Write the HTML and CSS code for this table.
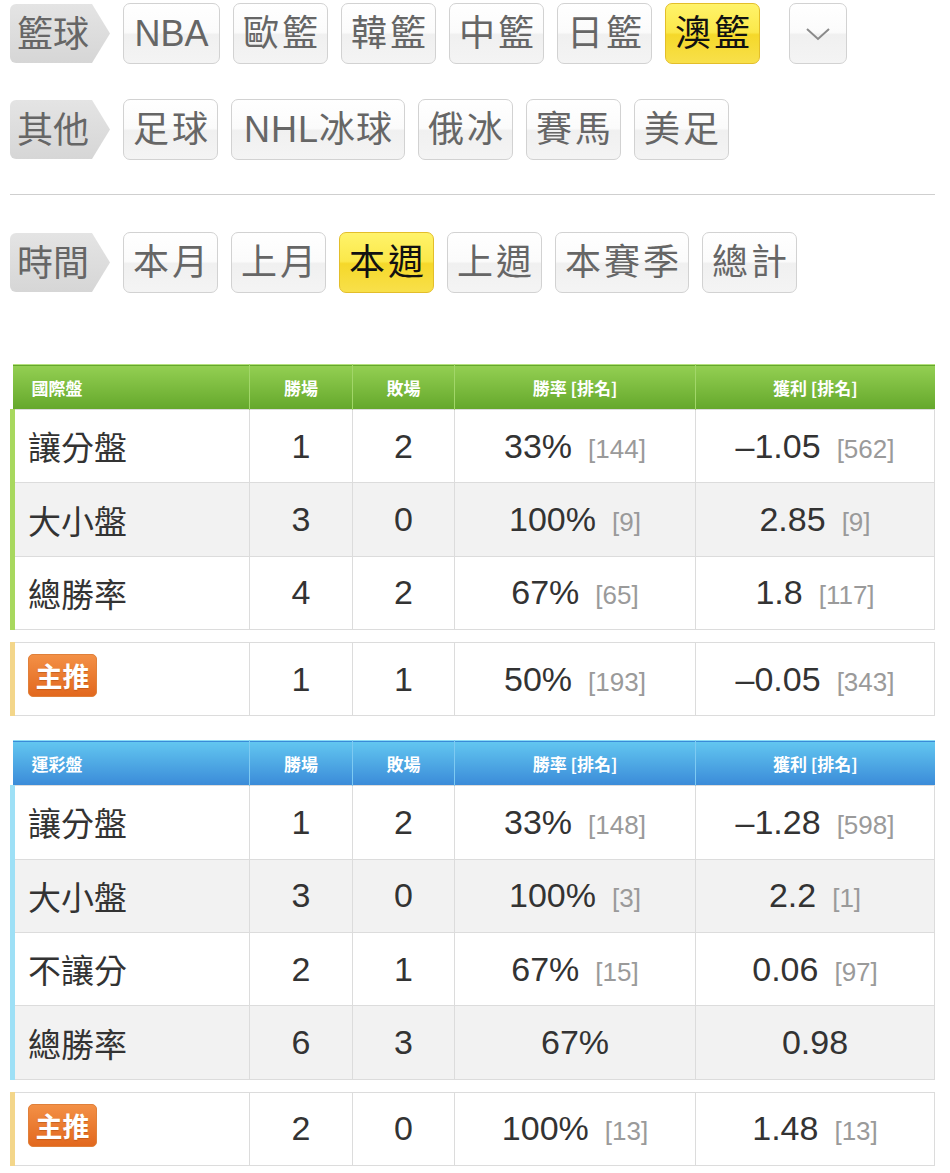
FILE: index.html
```html
<!DOCTYPE html>
<html lang="zh-Hant">
<head>
<meta charset="utf-8">
<title>戰績</title>
<link rel="stylesheet" href="styles.css">
</head>
<body>
<div class="page">
  <div class="filter-row">
    <div class="tag">籃球</div>
    <a class="btn nba">NBA</a>
    <a class="btn">歐籃</a>
    <a class="btn">韓籃</a>
    <a class="btn">中籃</a>
    <a class="btn">日籃</a>
    <a class="btn active">澳籃</a>
    <a class="btn more"><svg width="26" height="14" viewBox="0 0 26 14"><path d="M2 2 L13 12 L24 2" fill="none" stroke="#8a8a8a" stroke-width="2"/></svg></a>
  </div>
  <div class="filter-row">
    <div class="tag">其他</div>
    <a class="btn">足球</a>
    <a class="btn latin">NHL冰球</a>
    <a class="btn">俄冰</a>
    <a class="btn">賽馬</a>
    <a class="btn">美足</a>
  </div>
  <div class="sep"></div>
  <div class="filter-row time-row">
    <div class="tag">時間</div>
    <a class="btn">本月</a>
    <a class="btn">上月</a>
    <a class="btn active">本週</a>
    <a class="btn">上週</a>
    <a class="btn">本賽季</a>
    <a class="btn">總計</a>
  </div>

  <table class="stats green">
    <colgroup><col class="c1"><col class="c2"><col class="c3"><col class="c4"><col class="c5"></colgroup>
    <thead>
      <tr><th class="first">國際盤</th><th>勝場</th><th>敗場</th><th>勝率 [排名]</th><th>獲利 [排名]</th></tr>
    </thead>
    <tbody>
      <tr><td class="first">讓分盤</td><td>1</td><td>2</td><td>33%<span class="rk">[144]</span></td><td>–1.05<span class="rk">[562]</span></td></tr>
      <tr class="alt"><td class="first">大小盤</td><td>3</td><td>0</td><td>100%<span class="rk">[9]</span></td><td>2.85<span class="rk">[9]</span></td></tr>
      <tr><td class="first">總勝率</td><td>4</td><td>2</td><td>67%<span class="rk">[65]</span></td><td>1.8<span class="rk">[117]</span></td></tr>
    </tbody>
  </table>
  <table class="stats pick">
    <colgroup><col class="c1"><col class="c2"><col class="c3"><col class="c4"><col class="c5"></colgroup>
    <tbody>
      <tr><td class="first"><span class="badge">主推</span></td><td>1</td><td>1</td><td>50%<span class="rk">[193]</span></td><td>–0.05<span class="rk">[343]</span></td></tr>
    </tbody>
  </table>

  <table class="stats blue">
    <colgroup><col class="c1"><col class="c2"><col class="c3"><col class="c4"><col class="c5"></colgroup>
    <thead>
      <tr><th class="first">運彩盤</th><th>勝場</th><th>敗場</th><th>勝率 [排名]</th><th>獲利 [排名]</th></tr>
    </thead>
    <tbody>
      <tr><td class="first">讓分盤</td><td>1</td><td>2</td><td>33%<span class="rk">[148]</span></td><td>–1.28<span class="rk">[598]</span></td></tr>
      <tr class="alt"><td class="first">大小盤</td><td>3</td><td>0</td><td>100%<span class="rk">[3]</span></td><td>2.2<span class="rk">[1]</span></td></tr>
      <tr><td class="first">不讓分</td><td>2</td><td>1</td><td>67%<span class="rk">[15]</span></td><td>0.06<span class="rk">[97]</span></td></tr>
      <tr class="alt"><td class="first">總勝率</td><td>6</td><td>3</td><td>67%</td><td>0.98</td></tr>
    </tbody>
  </table>
  <table class="stats pick">
    <colgroup><col class="c1"><col class="c2"><col class="c3"><col class="c4"><col class="c5"></colgroup>
    <tbody>
      <tr><td class="first"><span class="badge">主推</span></td><td>2</td><td>0</td><td>100%<span class="rk">[13]</span></td><td>1.48<span class="rk">[13]</span></td></tr>
    </tbody>
  </table>
</div>
</body>
</html>
```
FILE: styles.css
```css
html, body {
  margin: 0;
  padding: 0;
  background: #fff;
}
body {
  font-family: "Liberation Sans", "Noto Sans CJK TC", sans-serif;
  color: #333;
}
.page {
  width: 925px;
  padding: 3px 15px 0 10px;
}
.filter-row {
  display: flex;
  align-items: center;
  gap: 13px;
  height: 61px;
  margin-bottom: 35px;
}
.tag {
  width: 100px;
  height: 59px;
  box-sizing: border-box;
  padding-left: 7px;
  font-size: 36px;
  line-height: 54px;
  color: #666;
  background: linear-gradient(#e4e4e4, #d6d6d6);
  border-radius: 6px 0 0 6px;
  clip-path: polygon(0 0, 82px 0, 100% 50%, 82px 100%, 0 100%);
  font-family: "Noto Sans CJK TC", sans-serif;
}
.btn {
  display: block;
  height: 61px;
  box-sizing: border-box;
  padding: 0 6px 0 9px;
  border: 1px solid #d2d2d2;
  border-radius: 7px;
  background: linear-gradient(#ffffff 0%, #fbfbfb 48%, #f0f0f0 52%, #f4f4f4 100%);
  color: #666;
  font-size: 36px;
  letter-spacing: 3px;
  line-height: 59px;
  white-space: nowrap;
}
.btn.nba {
  letter-spacing: 0;
  padding: 0 10.5px;
}
.btn.latin {
  letter-spacing: 1px;
  padding: 0 11px 0 12px;
}
.btn.active {
  background: linear-gradient(#fff36a 0%, #fbe84a 48%, #f5d82a 52%, #f8e04a 100%);
  border-color: #e3be2a;
  color: #111;
}
.btn.more {
  width: 58px;
  margin-left: 16px;
  padding: 0;
  display: flex;
  align-items: center;
  justify-content: center;
}
.sep {
  height: 1px;
  background: #cfcfcf;
  margin-top: -1px;
  margin-bottom: 37px;
}
.time-row {
  margin-bottom: 71px;
}

.stats {
  width: 922px;
  border-collapse: collapse;
  table-layout: fixed;
  margin-bottom: 12px;
}
.stats col.c1 { width: 237px; }
.stats col.c2 { width: 103px; }
.stats col.c3 { width: 102px; }
.stats col.c4 { width: 241px; }
.stats col.c5 { width: 239px; }
.stats th {
  height: 44px;
  padding: 0;
  color: #fff;
  font-size: 17px;
  font-weight: bold;
  text-align: center;
  font-family: "Noto Sans CJK TC", sans-serif;
}
.stats th.first {
  text-align: left;
  padding-left: 19px;
}
.green thead tr {
  background: linear-gradient(#93cf52, #64a72b);
  border-top: 1px solid #b4e07c;
}
.green th { border-left: 1px solid #a2d669; }
.blue thead tr {
  background: linear-gradient(#62c6f0, #3a8ad8);
  border-top: 1px solid #8cdcf6;
}
.blue th { border-left: 1px solid #7ecaf2; }
.stats th.first { border-left: none; }
.stats td {
  height: 72.4px;
  padding: 0;
  border: 1px solid #dcdcdc;
  text-align: center;
  font-size: 34px;
  color: #333;
}
.stats.pick td { height: 72px; }
.stats td.first {
  text-align: left;
  padding-left: 13px;
  font-size: 33px;
  font-family: "Noto Sans CJK TC", sans-serif;
}
.green td.first { border-left: 5px solid #a8d85e; }
.blue td.first { border-left: 5px solid #9ee0f6; }
.pick td.first { border-left: 5px solid #f3d68a; }
.stats tr.alt td { background: #f2f2f2; }
.stats.pick { margin-bottom: 24px; }
.rk {
  font-size: 26px;
  color: #9a9a9a;
  margin-left: 16px;
}
.badge {
  display: inline-block;
  width: 69px;
  height: 43px;
  box-sizing: border-box;
  border-radius: 5px;
  background: linear-gradient(#f39046, #e2681e);
  border: 1px solid #e0803a;
  color: #fff;
  font-size: 27px;
  font-weight: bold;
  line-height: 41px;
  text-align: center;
  vertical-align: middle;
  position: relative;
  top: -7px;
  text-shadow: 0 1px 1px rgba(150, 60, 0, 0.4);
}
```
